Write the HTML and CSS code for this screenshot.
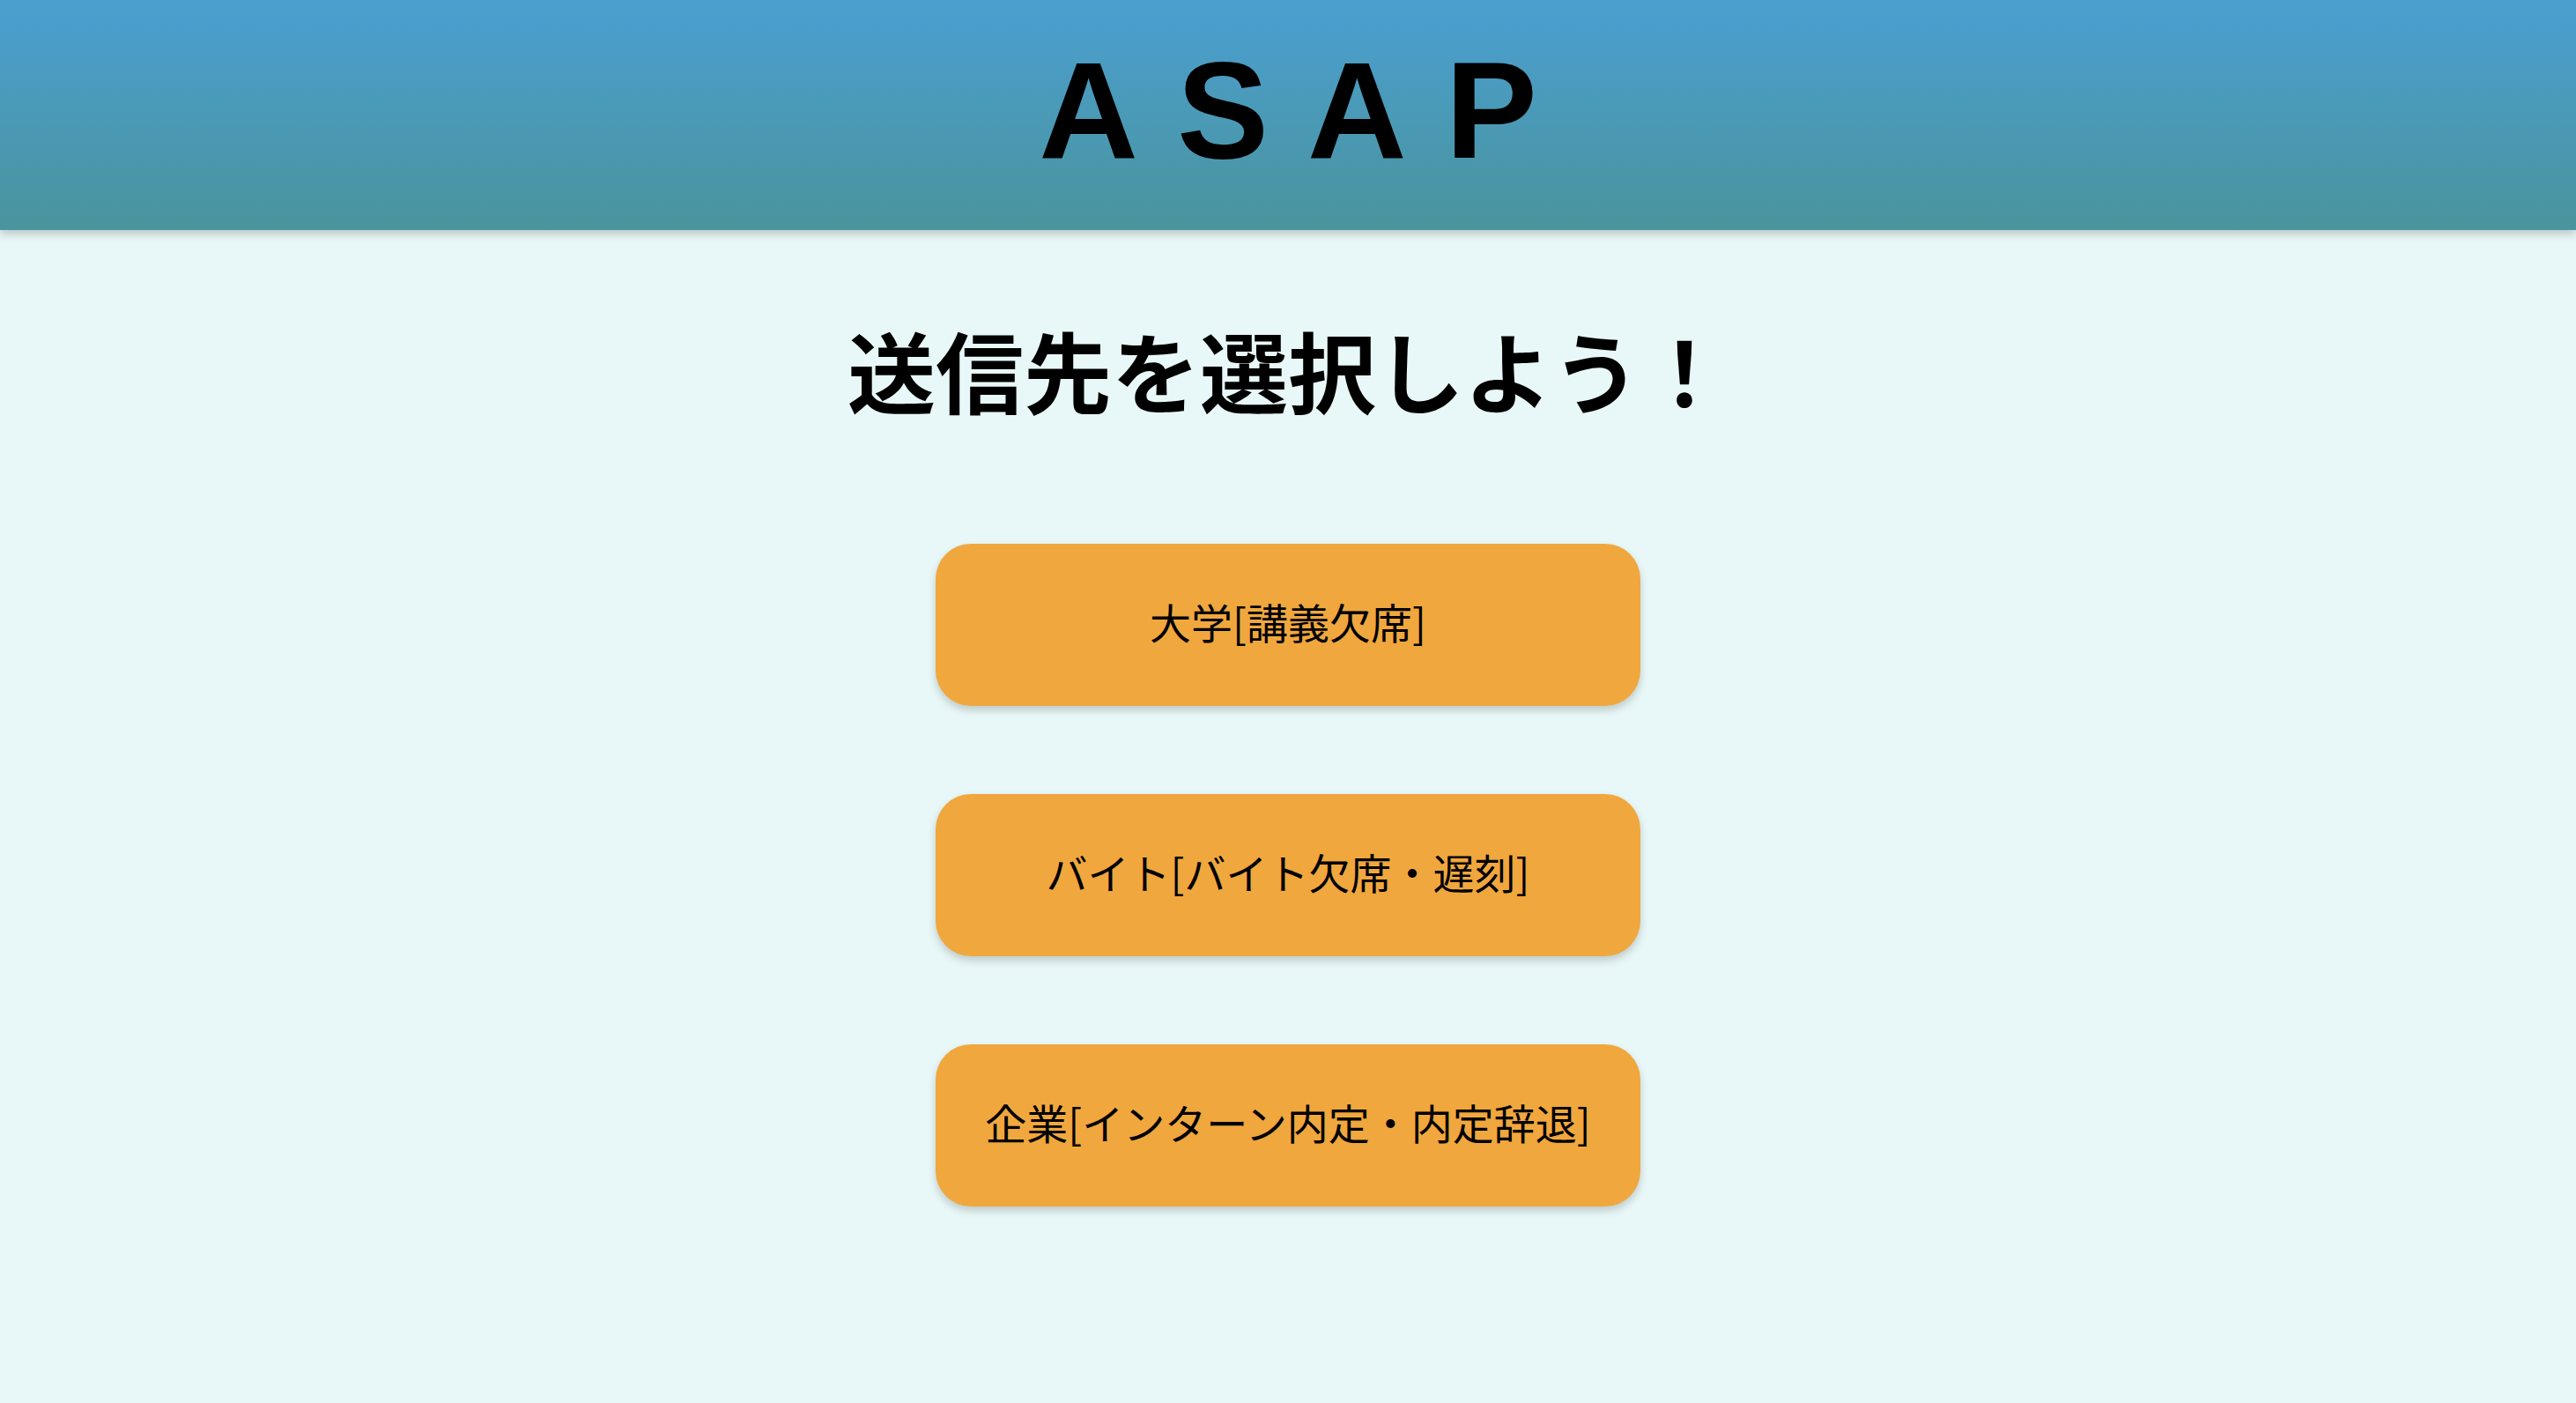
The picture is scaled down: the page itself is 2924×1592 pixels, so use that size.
FILE: index.html
```html
<!DOCTYPE html>
<html lang="ja">
<head>
<meta charset="utf-8">
<title>ASAP</title>
<link rel="stylesheet" href="styles.css">
</head>
<body>
<header class="site-header">
  <h1 class="logo">ASAP</h1>
</header>
<main class="content">
  <h2 class="title">送信先を選択しよう！</h2>
  <div class="choices">
    <button class="choice">大学[講義欠席]</button>
    <button class="choice">バイト[バイト欠席・遅刻]</button>
    <button class="choice">企業[インターン内定・内定辞退]</button>
  </div>
</main>
</body>
</html>
```

FILE: styles.css
```css
html, body {
  margin: 0;
  padding: 0;
}
body {
  background: #e8f7f7;
  min-height: 100vh;
  font-family: "Liberation Sans", "Noto Sans CJK JP", sans-serif;
  color: #000;
}
.site-header {
  height: 261px;
  box-sizing: border-box;
  padding-bottom: 12px;
  display: flex;
  align-items: center;
  justify-content: center;
  background: linear-gradient(to bottom, #4a9fd1, #4a949d);
  box-shadow: 0 4px 10px rgba(0, 0, 0, 0.22);
  position: relative;
}
.logo {
  margin: 0;
  font-family: "Liberation Sans", Arial, sans-serif;
  font-weight: bold;
  font-size: 156px;
  line-height: 1;
  letter-spacing: 44px;
  padding-left: 44px;
}
.content {
  display: flex;
  flex-direction: column;
  align-items: center;
  padding-top: 88px;
}
.title {
  margin: 0;
  font-family: "Noto Sans CJK JP", sans-serif;
  font-weight: bold;
  font-size: 100px;
  line-height: 140px;
}
.choices {
  margin-top: 128px;
  display: flex;
  flex-direction: column;
  gap: 100px;
}
.choice {
  width: 800px;
  height: 184px;
  border: none;
  border-radius: 40px;
  background: #f0a73e;
  box-shadow: 0 5px 10px rgba(0, 0, 0, 0.18);
  font-family: "Noto Sans CJK JP", sans-serif;
  font-size: 47px;
  color: #000;
  padding: 0 0 10px 0;
  cursor: pointer;
}
```
